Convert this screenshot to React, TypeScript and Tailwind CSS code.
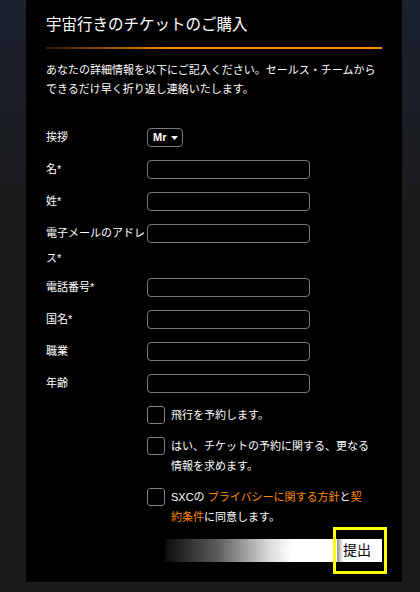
import React from 'react';

// ============================================================================
// Data
// ============================================================================

interface FieldRow {
  label: string;
  required?: boolean;
  tall?: boolean;
}

const fields: FieldRow[] = [
  { label: '名', required: true },
  { label: '姓', required: true },
  { label: '電子メールのアドレス', required: true, tall: true },
  { label: '電話番号', required: true },
  { label: '国名', required: true },
  { label: '職業' },
  { label: '年齢' },
];

const font = "font-['Liberation_Sans','Noto_Sans_CJK_JP',sans-serif]";

// ============================================================================
// Pieces
// ============================================================================

function TextInput() {
  return (
    <div className="w-[163px] h-[19px] rounded-[4px] border border-[#7a7a7a] bg-black" />
  );
}

function Checkbox() {
  return (
    <div className="mt-[1px] w-[18px] h-[18px] shrink-0 rounded-[3px] border border-[#808080] bg-black" />
  );
}

// ============================================================================
// App
// ============================================================================

export default function App() {
  return (
    <div
      className={`min-h-[592px] w-[420px] bg-[linear-gradient(to_bottom,#1b2230,#1a1a1a_220px)] ${font}`}
    >
      <div className="ml-[26px] w-[376px] h-[582px] bg-black px-[20px] text-white">
        {/* Heading */}
        <h1 className="pt-[15px] text-[15.5px] leading-[20px] font-normal">
          宇宙行きのチケットのご購入
        </h1>
        <div className="mt-[12px] h-[2px] bg-[linear-gradient(to_right,#2a1600_0%,#ff8a00_36%,#ff8a00_100%)]" />

        <p className="mt-[12px] text-[11px] leading-[19px]">
          あなたの詳細情報を以下にご記入ください。セールス・チームから
          <br />
          できるだけ早く折り返し連絡いたします。
        </p>

        {/* Form rows */}
        <div className="mt-[29px] text-[11px]">
          <div className="grid grid-cols-[101px_163px] h-[32px] items-start">
            <div className="leading-[19px]">挨拶</div>
            <div className="flex items-center gap-[5px] w-[36px] h-[19px] rounded-[4px] border border-[#7a7a7a] pl-[5px]">
              <span className="font-bold leading-none">Mr</span>
              <svg width="7" height="4" viewBox="0 0 7 4">
                <path d="M0 0h7L3.5 4z" fill="#fff" />
              </svg>
            </div>
          </div>

          {fields.map((f, i) => (
            <div
              key={f.label}
              className={`grid grid-cols-[101px_163px] items-start ${
                f.tall ? 'h-[54px]' : i === fields.length - 1 ? 'h-[31px]' : 'h-[32px]'
              }`}
            >
              <div className={f.tall ? 'leading-[25px] -mt-[3px] pr-[2px]' : 'leading-[19px]'}>
                {`${f.label}${f.required ? '*' : ''}`}
              </div>
              <TextInput />
            </div>
          ))}
        </div>

        {/* Checkboxes */}
        <div className="ml-[101px] flex flex-col gap-[11px] text-[11px] leading-[20px]">
          <div className="flex items-start gap-[6px]">
            <Checkbox />
            <span>飛行を予約します。</span>
          </div>
          <div className="flex items-start gap-[6px]">
            <Checkbox />
            <span>
              はい、チケットの予約に関する、更なる
              <br />
              情報を求めます。
            </span>
          </div>
          <div className="flex items-start gap-[6px]">
            <Checkbox />
            <span>
              SXCの <span className="text-[#ff8a00]">プライバシーに関する方針</span>と
              <span className="text-[#ff8a00]">契</span>
              <br />
              <span className="text-[#ff8a00]">約条件</span>に同意します。
            </span>
          </div>
        </div>

        {/* Submit */}
        <div className="mt-[12px] flex justify-end">
          <div className="relative flex w-[217px] h-[23px]">
            <div className="flex-1 bg-[radial-gradient(ellipse_60px_8px_at_100%_50%,#fff_60%,transparent_100%),linear-gradient(to_right,#0c0c0c_0%,#5a5a5a_30%,#d8d8d8_60%,#fff_74%)]" />
            <button className="w-[45px] h-[23px] bg-[linear-gradient(to_right,#8a8a8a_0px,#fff_6px)] pl-[6px] text-left text-[14px] leading-[23px] text-black">
              提出
            </button>
            <div className="absolute left-[168px] -top-[12px] w-[54px] h-[47px] border-[3px] border-[#ffff00]" />
          </div>
        </div>
      </div>
    </div>
  );
}
